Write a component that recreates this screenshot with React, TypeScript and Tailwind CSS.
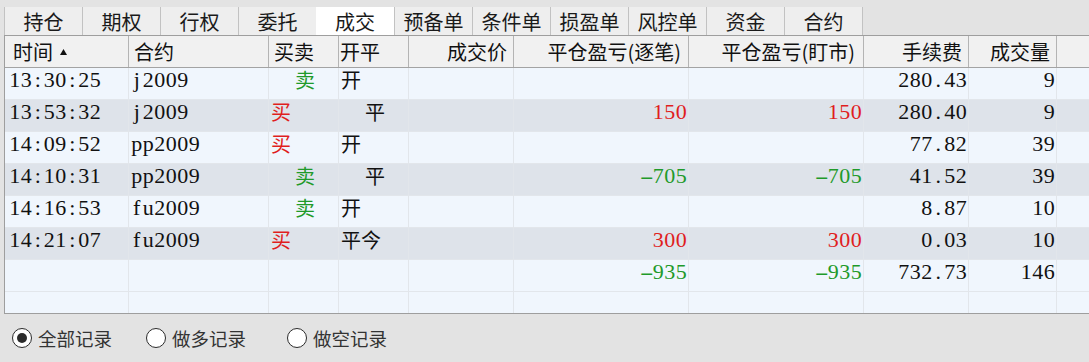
import React from "react";

const tabs = ["持仓", "期权", "行权", "委托", "成交", "预备单", "条件单", "损盈单", "风控单", "资金", "合约"];

const headers = [
  { label: "时间", w: "w-[124px]", cls: "justify-start pl-[8px]" },
  { label: "合约", w: "w-[140px]", cls: "justify-start pl-[5px]" },
  { label: "买卖", w: "w-[70px]", cls: "justify-start pl-[5px]" },
  { label: "开平", w: "w-[70px]", cls: "justify-start pl-[1px]" },
  { label: "成交价", w: "w-[105px]", cls: "justify-end pr-[6px]" },
  { label: "平仓盈亏(逐笔)", w: "w-[175px]", cls: "justify-end pr-[7px]" },
  { label: "平仓盈亏(盯市)", w: "w-[175px]", cls: "justify-end pr-[8px]" },
  { label: "手续费", w: "w-[105px]", cls: "justify-end pr-[6px]" },
  { label: "成交量", w: "w-[88px]", cls: "justify-end pr-[6px]" },
];

type Trade = {
  time: string;
  code: string;
  side: "买" | "卖" | "";
  open: string;
  byTrade: string;
  byMarket: string;
  fee: string;
  qty: string;
};

const trades: Trade[] = [
  { time: "13:30:25", code: "j2009", side: "卖", open: "开", byTrade: "", byMarket: "", fee: "280.43", qty: "9" },
  { time: "13:53:32", code: "j2009", side: "买", open: "平", byTrade: "150", byMarket: "150", fee: "280.40", qty: "9" },
  { time: "14:09:52", code: "pp2009", side: "买", open: "开", byTrade: "", byMarket: "", fee: "77.82", qty: "39" },
  { time: "14:10:31", code: "pp2009", side: "卖", open: "平", byTrade: "-705", byMarket: "-705", fee: "41.52", qty: "39" },
  { time: "14:16:53", code: "fu2009", side: "卖", open: "开", byTrade: "", byMarket: "", fee: "8.87", qty: "10" },
  { time: "14:21:07", code: "fu2009", side: "买", open: "平今", byTrade: "300", byMarket: "300", fee: "0.03", qty: "10" },
];

const total: Trade = { time: "", code: "", side: "", open: "", byTrade: "-935", byMarket: "-935", fee: "732.73", qty: "146" };
const blank: Trade = { time: "", code: "", side: "", open: "", byTrade: "", byMarket: "", fee: "", qty: "" };

// fixed-width cells so the serif digits line up like the old 宋体 grid
function Mono({ text }: { text: string }) {
  return (
    <span className="flex font-['Liberation_Serif',serif] text-[22px] leading-none">
      {text.split("").map((c, i) => (
        <span key={i} className={`inline-block w-[11.5px] text-center ${c === "-" ? "scale-x-[1.9]" : ""}`}>
          {c}
        </span>
      ))}
    </span>
  );
}

function pnlColor(v: string) {
  if (!v) return "";
  return v.startsWith("-") ? "text-[#1f9a2a]" : "text-[#e01e1e]";
}

const cell = "h-full flex items-center pb-[7px] border-r border-[#e2e6eb] shrink-0";

function Row({ t, dark, last }: { t: Trade; dark?: boolean; last?: boolean }) {
  return (
    <div
      className={`flex ${last ? "h-[21px]" : "h-[32px] border-b border-[#e2e6eb]"} ${
        dark ? "bg-[#dee3ea]" : "bg-[#f0f6fd]"
      } text-[#111]`}
    >
      <div className={`${cell} w-[124px] pl-[4px]`}>{t.time && <Mono text={t.time} />}</div>
      <div className={`${cell} w-[140px] pl-[2px]`}>{t.code && <Mono text={t.code} />}</div>
      <div
        className={`${cell} w-[70px] ${t.side === "卖" ? "pl-[26px] text-[#1f9a2a]" : "pl-[2px] text-[#e01e1e]"} text-[20px] leading-none`}
      >
        {t.side}
      </div>
      <div className={`${cell} w-[70px] ${t.open === "平" ? "pl-[26px]" : "pl-[2px]"} text-[20px] leading-none`}>
        {t.open}
      </div>
      <div className={`${cell} w-[105px]`}></div>
      <div className={`${cell} w-[175px] justify-end pr-[1px] ${pnlColor(t.byTrade)}`}>
        {t.byTrade && <Mono text={t.byTrade} />}
      </div>
      <div className={`${cell} w-[175px] justify-end pr-[1px] ${pnlColor(t.byMarket)}`}>
        {t.byMarket && <Mono text={t.byMarket} />}
      </div>
      <div className={`${cell} w-[105px] justify-end pr-[1px]`}>{t.fee && <Mono text={t.fee} />}</div>
      <div className={`${cell} w-[88px] justify-end pr-[1px]`}>{t.qty && <Mono text={t.qty} />}</div>
      <div className="flex-1"></div>
    </div>
  );
}

function Radio({ label, checked, className }: { label: string; checked?: boolean; className?: string }) {
  return (
    <div className={`flex items-center gap-[6px] ${className ?? ""}`}>
      <span className="w-[20px] h-[20px] rounded-full border border-[#2b2b2b] bg-white flex items-center justify-center">
        {checked && <span className="w-[10px] h-[10px] rounded-full bg-[#2b2b2b]"></span>}
      </span>
      <span className="text-[18.5px] leading-none text-[#333]">{label}</span>
    </div>
  );
}

export default function App() {
  return (
    <div className="w-[1089px] h-[362px] bg-[#e3e3e3] flex flex-col overflow-hidden font-['Noto_Sans_CJK_SC','Noto_Sans',sans-serif]">
      {/* Tab strip */}
      <div className="h-[7px] shrink-0"></div>
      <div className="h-[28px] shrink-0 flex pl-[4px]">
        {tabs.map((tab) => {
          const active = tab === "成交";
          return (
            <div
              key={tab}
              className={`w-[78px] h-full flex items-center justify-center pt-[1px] text-[20px] leading-none text-[#1a1a1a] ${
                active ? "bg-white" : "bg-[#eeeeee] border-l border-[#c2c2c2]"
              }`}
            >
              {tab}
            </div>
          );
        })}
        <div className="w-px h-full bg-[#c2c2c2]"></div>
      </div>

      {/* Trades table */}
      <div className="ml-[4px] shrink-0 border-l border-t border-b border-[#9e9e9e]">
        <div className="flex h-[32px] bg-[#f1f1f1] border-b border-[#a3a3a3] text-[20px] leading-none text-[#111]">
          {headers.map((h) => (
            <div key={h.label} className={`${h.w} shrink-0 h-full flex items-center border-r border-[#b4b4b4] ${h.cls}`}>
              {h.label}
              {h.label === "时间" && (
                <svg width="7" height="6" viewBox="0 0 7 6" className="ml-[7px]">
                  <path d="M3.5 0 L7 6 L0 6 Z" fill="#111" />
                </svg>
              )}
            </div>
          ))}
          <div className="flex-1"></div>
        </div>
        {trades.map((t, i) => (
          <Row key={t.time} t={t} dark={i % 2 === 1} />
        ))}
        <Row t={total} />
        <Row t={blank} last />
      </div>

      {/* Filter */}
      <div className="flex-1 flex items-center pl-[12px]">
        <Radio label="全部记录" checked />
        <Radio label="做多记录" className="ml-[34px]" />
        <Radio label="做空记录" className="ml-[41px]" />
      </div>
    </div>
  );
}
